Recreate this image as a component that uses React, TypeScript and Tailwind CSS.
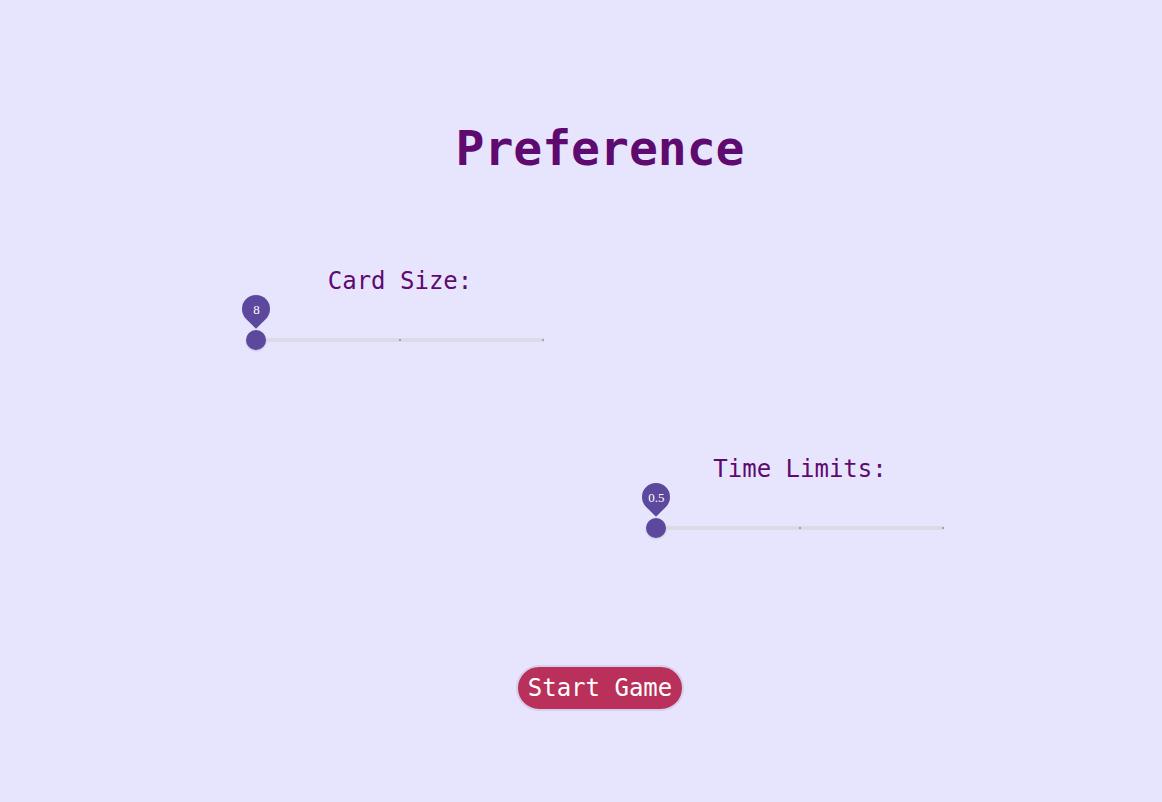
import * as React from 'react'

const FONT = "font-['DejaVu_Sans_Mono',monospace]"

const Slider: React.FC<{value: string}> = ({value}) => {
  return (
    <div className="relative h-[58px] w-[288px]">
      {/* rail */}
      <div className="absolute left-0 right-0 top-[45px] h-[4px] bg-[#dcdae6]" />
      {/* marks */}
      <div className="absolute left-[143px] top-[46px] h-[2px] w-[2px] bg-[#a5a3b4]" />
      <div className="absolute left-[286px] top-[46px] h-[2px] w-[2px] bg-[#a5a3b4]" />
      {/* thumb */}
      <div className="absolute left-[-10px] top-[37px] h-[20px] w-[20px] rounded-full bg-[#5c489c] shadow-[0_1px_2px_rgba(0,0,0,0.15)]" />
      {/* value label */}
      <div className="absolute left-[-14px] top-[2px] flex h-[28px] w-[28px] -rotate-45 items-center justify-center rounded-[50%_50%_50%_0] bg-[#5c489c]">
        <span className="rotate-45 font-['Liberation_Serif',serif] text-[13px] leading-none text-white">
          {value}
        </span>
      </div>
    </div>
  )
}

const Setting: React.FC<{label: string; value: string}> = ({label, value}) => {
  return (
    <div className="flex w-[400px] flex-col items-center">
      <div className={`${FONT} text-[24px] leading-[24px] text-[#5e0a6f]`}>
        {label}
      </div>
      <Slider value={value} />
    </div>
  )
}

export default function App() {
  return (
    <div className={`min-h-screen w-full bg-[#e7e5fd] ${FONT}`}>
      <div className="ml-[200px] flex w-[800px] flex-col">
        <h1 className="mt-[124px] text-center text-[48px] font-bold leading-[48px] text-[#5e0a6f]">
          Preference
        </h1>
        <div className="mt-[97px] flex justify-start">
          <Setting label="Card Size:" value="8" />
        </div>
        <div className="mt-[106px] flex justify-end">
          <Setting label="Time Limits:" value="0.5" />
        </div>
        <div className="mt-[126px] flex justify-center pb-[91px]">
          <button className="rounded-full border-2 border-[#d6d0ec] bg-[#b9305a] px-[10px] py-[9px] text-[24px] leading-[24px] text-white">
            Start Game
          </button>
        </div>
      </div>
    </div>
  )
}
